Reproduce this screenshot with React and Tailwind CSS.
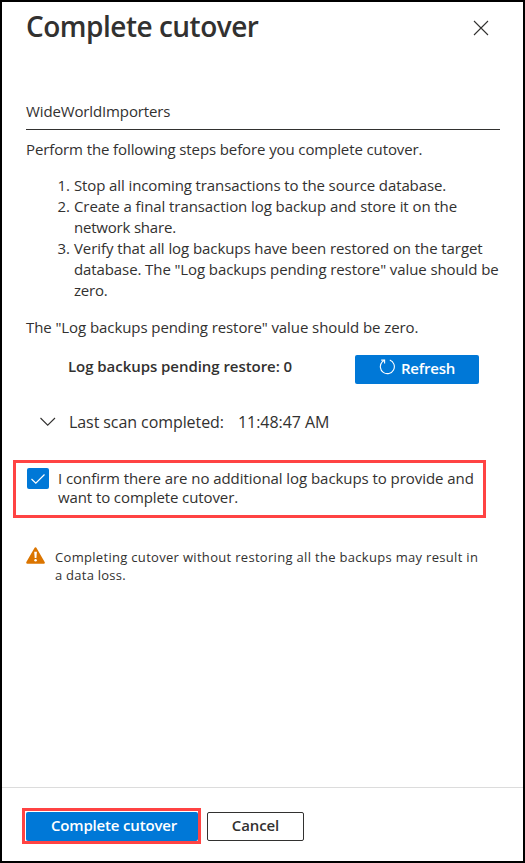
const steps = [
  [
    { text: 'Stop all incoming transactions to the source database.', track: 'tracking-[-0.11px]' },
  ],
  [
    { text: 'Create a final transaction log backup and store it on the', track: 'tracking-[-0.08px]' },
    { text: 'network share.', track: 'tracking-[-0.2px]' },
  ],
  [
    { text: 'Verify that all log backups have been restored on the target', track: 'tracking-[-0.08px]' },
    { text: 'database. The "Log backups pending restore" value should be', track: 'tracking-[-0.1px]' },
    { text: 'zero.', track: 'tracking-[-0.2px]' },
  ],
];

function Line({ className = '', children }) {
  return (
    <div className="whitespace-nowrap">
      <span className={className}>{children}</span>
    </div>
  );
}

function CloseIcon() {
  return (
    <svg width="16" height="16" viewBox="0 0 16 16" fill="none" stroke="#323130" strokeWidth="1.1">
      <path d="M1 1L15 15M15 1L1 15" />
    </svg>
  );
}

function ChevronIcon() {
  return (
    <svg width="16" height="10" viewBox="0 0 16 10" fill="none" stroke="#323130" strokeWidth="1.1">
      <path d="M0.5 1L7.7 8.2L15 1" />
    </svg>
  );
}

function RefreshIcon() {
  return (
    <svg width="16" height="16" viewBox="0 0 16 16" fill="none" stroke="#fff" strokeWidth="1.1">
      <path d="M10.8 1.1A7 7 0 1 1 3.2 2.9L5.4 1.2" />
      <path d="M2.2 1.1H5.6V4.6" />
    </svg>
  );
}

function WarningIcon() {
  return (
    <svg width="19" height="17" viewBox="0 0 19 17">
      <path d="M9.5 1.5L17.6 15.6H1.4Z" fill="#db7500" stroke="#db7500" strokeWidth="2.4" strokeLinejoin="round" />
      <path d="M8.2 4.8H10.9L10.4 11H8.7Z" fill="#fff" />
      <circle cx="9.55" cy="13.2" r="1.25" fill="#fff" />
    </svg>
  );
}

export default function App() {
  return (
    <div className="flex h-[863px] w-[525px] flex-col border-2 border-black bg-white font-['Open_Sans','Noto_Sans',sans-serif] text-[15px] text-[#323130]">
      <header className="flex h-[99px] items-start justify-between pt-1 pr-[34px] pl-6">
        <h1 className="text-[28px] leading-10 font-semibold tracking-[-0.5px] whitespace-nowrap">Complete cutover</h1>
        <button className="mt-[14px]" aria-label="Close"><CloseIcon /></button>
      </header>

      <main className="flex-1">
        <div className="mr-[23px] ml-6 h-[29px] border-b border-[#323130] leading-5">
          <Line className="tracking-[-0.13px]">WideWorldImporters</Line>
        </div>
        <div className="mt-[9px] ml-6 leading-[21px]">
          <Line className="tracking-[-0.11px]">Perform the following steps before you complete cutover.</Line>
          <ol className="mt-[15px] mb-4">
            {steps.map((lines, i) => (
              <li key={i} className="flex">
                <span className="w-12 pr-[4px] text-right">{i + 1}.</span>
                <div>
                  {lines.map((line) => (
                    <Line key={line.text} className={line.track}>{line.text}</Line>
                  ))}
                </div>
              </li>
            ))}
          </ol>
          <Line className="tracking-[-0.08px]">The "Log backups pending restore" value should be zero.</Line>
        </div>

        <div className="mt-[17px] mr-11 ml-[66px] flex h-[29px] justify-between">
          <div className="leading-[23px] font-semibold"><Line className="tracking-[-0.05px]">Log backups pending restore: 0</Line></div>
          <button className="flex w-[124px] justify-center gap-[6px] rounded-[2px] bg-[#0078d7] pt-1 font-semibold text-white">
            <RefreshIcon />
            <span className="leading-[19px] tracking-[-0.2px]">Refresh</span>
          </button>
        </div>

        <div className="mt-[27px] ml-[38px] flex h-[22px] items-center text-[16px] leading-[22px]">
          <ChevronIcon />
          <div className="ml-[13px] w-[169px]"><Line className="tracking-[-0.08px]">Last scan completed:</Line></div>
          <Line className="tracking-[-0.05px]">11:48:47 AM</Line>
        </div>

        <label className="mt-[27px] ml-[11px] flex h-[58px] w-[473px] gap-[9px] border-3 border-[#ff4343] pt-[5px] pl-[11px]">
          <span className="flex h-[21px] w-[22px] items-center justify-center rounded-[2px] bg-[#0078d7]">
            <svg width="16" height="12" viewBox="0 0 16 12" fill="none" stroke="#fff" strokeWidth="1.2">
              <path d="M1.5 6L5.8 10.2L14.5 1.5" />
            </svg>
          </span>
          <div className="pt-px leading-[19px]">
            <Line className="tracking-[-0.06px]">I confirm there are no additional log backups to provide and</Line>
            <Line className="tracking-[-0.1px]">want to complete cutover.</Line>
          </div>
        </label>

        <div className="mt-[29px] ml-6 flex gap-[10px] text-[13px] leading-[18px]">
          <WarningIcon />
          <div className="pt-px">
            <Line className="tracking-[0.31px]">Completing cutover without restoring all the backups may result in</Line>
            <Line className="tracking-[0.25px]">a data loss.</Line>
          </div>
        </div>
      </main>

      <footer className="flex h-[74px] gap-[6px] border-t border-[#dcdcdc] pt-5 pl-5 font-semibold">
        <div className="h-9 w-[179px] border-3 border-[#ff4343] pt-px pl-px">
          <button className="block h-[29px] w-[172px] rounded-[2px] bg-[#0078d7] pb-[2px] pl-1 text-white">
            <Line className="tracking-[-0.17px]">Complete cutover</Line>
          </button>
        </div>
        <button className="mt-1 h-[29px] w-[97px] rounded-[2px] border border-[#323130] pb-[2px]">
          <Line className="tracking-[-0.1px]">Cancel</Line>
        </button>
      </footer>
    </div>
  );
}
